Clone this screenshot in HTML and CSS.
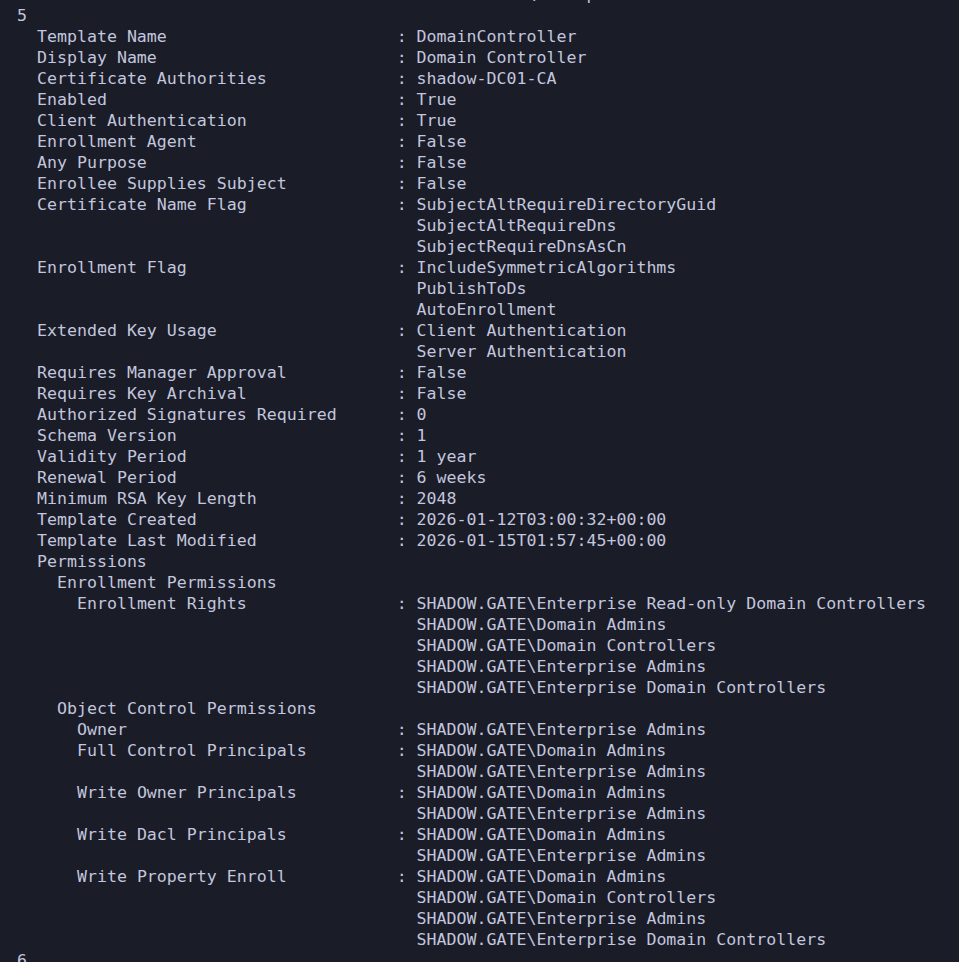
FILE: index.html
```html
<!DOCTYPE html>
<html>
<head>
<meta charset="utf-8">
<link rel="stylesheet" href="styles.css">
</head>
<body>
<div class="term">
<div class="ln c">SHADOW.GATE\Enterprise Admins</div>
<div class="ln">5</div>
<div class="ln"><span class="k i1">Template Name</span><span>: DomainController</span></div>
<div class="ln"><span class="k i1">Display Name</span><span>: Domain Controller</span></div>
<div class="ln"><span class="k i1">Certificate Authorities</span><span>: shadow-DC01-CA</span></div>
<div class="ln"><span class="k i1">Enabled</span><span>: True</span></div>
<div class="ln"><span class="k i1">Client Authentication</span><span>: True</span></div>
<div class="ln"><span class="k i1">Enrollment Agent</span><span>: False</span></div>
<div class="ln"><span class="k i1">Any Purpose</span><span>: False</span></div>
<div class="ln"><span class="k i1">Enrollee Supplies Subject</span><span>: False</span></div>
<div class="ln"><span class="k i1">Certificate Name Flag</span><span>: SubjectAltRequireDirectoryGuid</span></div>
<div class="ln c">SubjectAltRequireDns</div>
<div class="ln c">SubjectRequireDnsAsCn</div>
<div class="ln"><span class="k i1">Enrollment Flag</span><span>: IncludeSymmetricAlgorithms</span></div>
<div class="ln c">PublishToDs</div>
<div class="ln c">AutoEnrollment</div>
<div class="ln"><span class="k i1">Extended Key Usage</span><span>: Client Authentication</span></div>
<div class="ln c">Server Authentication</div>
<div class="ln"><span class="k i1">Requires Manager Approval</span><span>: False</span></div>
<div class="ln"><span class="k i1">Requires Key Archival</span><span>: False</span></div>
<div class="ln"><span class="k i1">Authorized Signatures Required</span><span>: 0</span></div>
<div class="ln"><span class="k i1">Schema Version</span><span>: 1</span></div>
<div class="ln"><span class="k i1">Validity Period</span><span>: 1 year</span></div>
<div class="ln"><span class="k i1">Renewal Period</span><span>: 6 weeks</span></div>
<div class="ln"><span class="k i1">Minimum RSA Key Length</span><span>: 2048</span></div>
<div class="ln"><span class="k i1">Template Created</span><span>: 2026-01-12T03:00:32+00:00</span></div>
<div class="ln"><span class="k i1">Template Last Modified</span><span>: 2026-01-15T01:57:45+00:00</span></div>
<div class="ln"><span class="k i1">Permissions</span></div>
<div class="ln"><span class="k i2">Enrollment Permissions</span></div>
<div class="ln"><span class="k i3">Enrollment Rights</span><span>: SHADOW.GATE\Enterprise Read-only Domain Controllers</span></div>
<div class="ln c">SHADOW.GATE\Domain Admins</div>
<div class="ln c">SHADOW.GATE\Domain Controllers</div>
<div class="ln c">SHADOW.GATE\Enterprise Admins</div>
<div class="ln c">SHADOW.GATE\Enterprise Domain Controllers</div>
<div class="ln"><span class="k i2">Object Control Permissions</span></div>
<div class="ln"><span class="k i3">Owner</span><span>: SHADOW.GATE\Enterprise Admins</span></div>
<div class="ln"><span class="k i3">Full Control Principals</span><span>: SHADOW.GATE\Domain Admins</span></div>
<div class="ln c">SHADOW.GATE\Enterprise Admins</div>
<div class="ln"><span class="k i3">Write Owner Principals</span><span>: SHADOW.GATE\Domain Admins</span></div>
<div class="ln c">SHADOW.GATE\Enterprise Admins</div>
<div class="ln"><span class="k i3">Write Dacl Principals</span><span>: SHADOW.GATE\Domain Admins</span></div>
<div class="ln c">SHADOW.GATE\Enterprise Admins</div>
<div class="ln"><span class="k i3">Write Property Enroll</span><span>: SHADOW.GATE\Domain Admins</span></div>
<div class="ln c">SHADOW.GATE\Domain Controllers</div>
<div class="ln c">SHADOW.GATE\Enterprise Admins</div>
<div class="ln c">SHADOW.GATE\Enterprise Domain Controllers</div>
<div class="ln">6</div>
</div>
</body>
</html>
```

FILE: styles.css
```css
html, body {
  margin: 0;
  padding: 0;
  background: #1a1c27;
  height: 100%;
  overflow: hidden;
}

.term {
  margin-top: -16px;
  padding-left: 17px;
  font-family: "DejaVu Sans Mono", monospace;
  font-size: 16.6px;
  line-height: 21px;
  color: #c2c6de;
}

.ln {
  white-space: pre;
  height: 21px;
}

.c {
  padding-left: 40ch;
}

.k {
  display: inline-block;
  width: 38ch;
  box-sizing: border-box;
}

.i1 { padding-left: 2ch; }
.i2 { padding-left: 4ch; }
.i3 { padding-left: 6ch; }
```
